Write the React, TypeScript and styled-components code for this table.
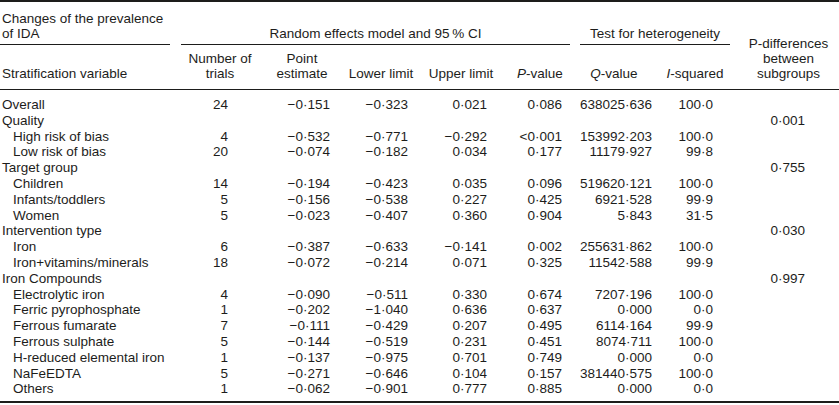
import styled, { createGlobalStyle } from 'styled-components';

const GlobalStyle = createGlobalStyle`
  html, body {
    margin: 0;
    padding: 0;
    background: #ffffff;
  }
  body {
    font-family: "Liberation Sans", Arial, Helvetica, sans-serif;
    color: #1d1d1b;
  }
`;

const Table = styled.table`
  width: 839px;
  table-layout: fixed;
  border-collapse: separate;
  border-spacing: 0;
  font-size: 13.5px;
  border-top: 2px solid #1d1d1b;
  border-bottom: 2px solid #1d1d1b;
`;

const HeadCell = styled.th<{ $align?: 'left' | 'center' }>`
  font-weight: normal;
  line-height: 15px;
  text-align: ${(p) => p.$align || 'center'};
  vertical-align: bottom;
  padding: 0;
  white-space: nowrap;
`;

const GroupCell = styled(HeadCell)`
  padding-top: 9px;
`;

const Spanner = styled.div<{ $left?: number; $right?: number; $align?: 'left' | 'center' }>`
  margin-left: ${(p) => p.$left || 0}px;
  margin-right: ${(p) => p.$right || 0}px;
  padding: 0 0 3px ${(p) => (p.$align === 'left' ? 2 : 0)}px;
  text-align: ${(p) => p.$align || 'center'};
  border-bottom: 1px solid #1d1d1b;
`;

const ColumnCell = styled(HeadCell)`
  padding-top: 6px;
  padding-bottom: 8px;
  border-bottom: 1px solid #1d1d1b;
`;

const LabelHead = styled(ColumnCell)`
  padding-left: 2px;
`;

const Body = styled.tbody`
  tr:first-child td {
    padding-top: 7px;
  }
  tr:last-child td {
    padding-bottom: 4px;
  }
`;

const Label = styled.td<{ $sub?: boolean }>`
  padding: 0 0 0 ${(p) => (p.$sub ? 13 : 2)}px;
  line-height: 15.8px;
  white-space: nowrap;
`;

const Value = styled.td<{ $pad: number }>`
  padding: 0 ${(p) => p.$pad}px 0 0;
  line-height: 15.8px;
  text-align: right;
  white-space: nowrap;
`;

const columns = [
  { width: 180, pad: 0 },
  { width: 80, pad: 32 },
  { width: 84, pad: 14 },
  { width: 74, pad: 10 },
  { width: 86, pad: 17 },
  { width: 72, pad: 14 },
  { width: 76, pad: 0 },
  { width: 86, pad: 25 },
  { width: 101, pad: 34 },
];

type Row = {
  label: string;
  sub?: boolean;
  values?: string[];
  pdiff?: string;
};

const rows: Row[] = [
  { label: 'Overall', values: ['24', '−0·151', '−0·323', '0·021', '0·086', '638025·636', '100·0'] },
  { label: 'Quality', pdiff: '0·001' },
  { label: 'High risk of bias', sub: true, values: ['4', '−0·532', '−0·771', '−0·292', '<0·001', '153992·203', '100·0'] },
  { label: 'Low risk of bias', sub: true, values: ['20', '−0·074', '−0·182', '0·034', '0·177', '11179·927', '99·8'] },
  { label: 'Target group', pdiff: '0·755' },
  { label: 'Children', sub: true, values: ['14', '−0·194', '−0·423', '0·035', '0·096', '519620·121', '100·0'] },
  { label: 'Infants/toddlers', sub: true, values: ['5', '−0·156', '−0·538', '0·227', '0·425', '6921·528', '99·9'] },
  { label: 'Women', sub: true, values: ['5', '−0·023', '−0·407', '0·360', '0·904', '5·843', '31·5'] },
  { label: 'Intervention type', pdiff: '0·030' },
  { label: 'Iron', sub: true, values: ['6', '−0·387', '−0·633', '−0·141', '0·002', '255631·862', '100·0'] },
  { label: 'Iron+vitamins/minerals', sub: true, values: ['18', '−0·072', '−0·214', '0·071', '0·325', '11542·588', '99·9'] },
  { label: 'Iron Compounds', pdiff: '0·997' },
  { label: 'Electrolytic iron', sub: true, values: ['4', '−0·090', '−0·511', '0·330', '0·674', '7207·196', '100·0'] },
  { label: 'Ferric pyrophosphate', sub: true, values: ['1', '−0·202', '−1·040', '0·636', '0·637', '0·000', '0·0'] },
  { label: 'Ferrous fumarate', sub: true, values: ['7', '−0·111', '−0·429', '0·207', '0·495', '6114·164', '99·9'] },
  { label: 'Ferrous sulphate', sub: true, values: ['5', '−0·144', '−0·519', '0·231', '0·451', '8074·711', '100·0'] },
  { label: 'H-reduced elemental iron', sub: true, values: ['1', '−0·137', '−0·975', '0·701', '0·749', '0·000', '0·0'] },
  { label: 'NaFeEDTA', sub: true, values: ['5', '−0·271', '−0·646', '0·104', '0·157', '381440·575', '100·0'] },
  { label: 'Others', sub: true, values: ['1', '−0·062', '−0·901', '0·777', '0·885', '0·000', '0·0'] },
];

const App = () => {
  return (
    <>
      <GlobalStyle />
      <Table>
        <colgroup>
          {columns.map((c, i) => (
            <col key={i} style={{ width: c.width }} />
          ))}
        </colgroup>
        <thead>
          <tr>
            <GroupCell $align="left">
              <Spanner $right={10} $align="left">
                Changes of the prevalence
                <br />
                of IDA
              </Spanner>
            </GroupCell>
            <GroupCell colSpan={5}>
              <Spanner $left={1} $right={6}>Random effects model and 95&thinsp;% CI</Spanner>
            </GroupCell>
            <GroupCell colSpan={2}>
              <Spanner $left={4} $right={8}>Test for heterogeneity</Spanner>
            </GroupCell>
            <ColumnCell rowSpan={2}>
              P-differences
              <br />
              between
              <br />
              subgroups
            </ColumnCell>
          </tr>
          <tr>
            <LabelHead $align="left">Stratification variable</LabelHead>
            <ColumnCell>
              Number of
              <br />
              trials
            </ColumnCell>
            <ColumnCell>
              Point
              <br />
              estimate
            </ColumnCell>
            <ColumnCell>Lower limit</ColumnCell>
            <ColumnCell>Upper limit</ColumnCell>
            <ColumnCell>
              <i>P</i>-value
            </ColumnCell>
            <ColumnCell>
              <i>Q</i>-value
            </ColumnCell>
            <ColumnCell>
              <i>I</i>-squared
            </ColumnCell>
          </tr>
        </thead>
        <Body>
          {rows.map((r) => (
            <tr key={r.label}>
              <Label $sub={r.sub}>{r.label}</Label>
              {columns.slice(1, 8).map((c, i) => (
                <Value key={i} $pad={c.pad}>
                  {r.values ? r.values[i] : ''}
                </Value>
              ))}
              <Value $pad={columns[8].pad}>{r.pdiff || ''}</Value>
            </tr>
          ))}
        </Body>
      </Table>
    </>
  );
};

export default App;
